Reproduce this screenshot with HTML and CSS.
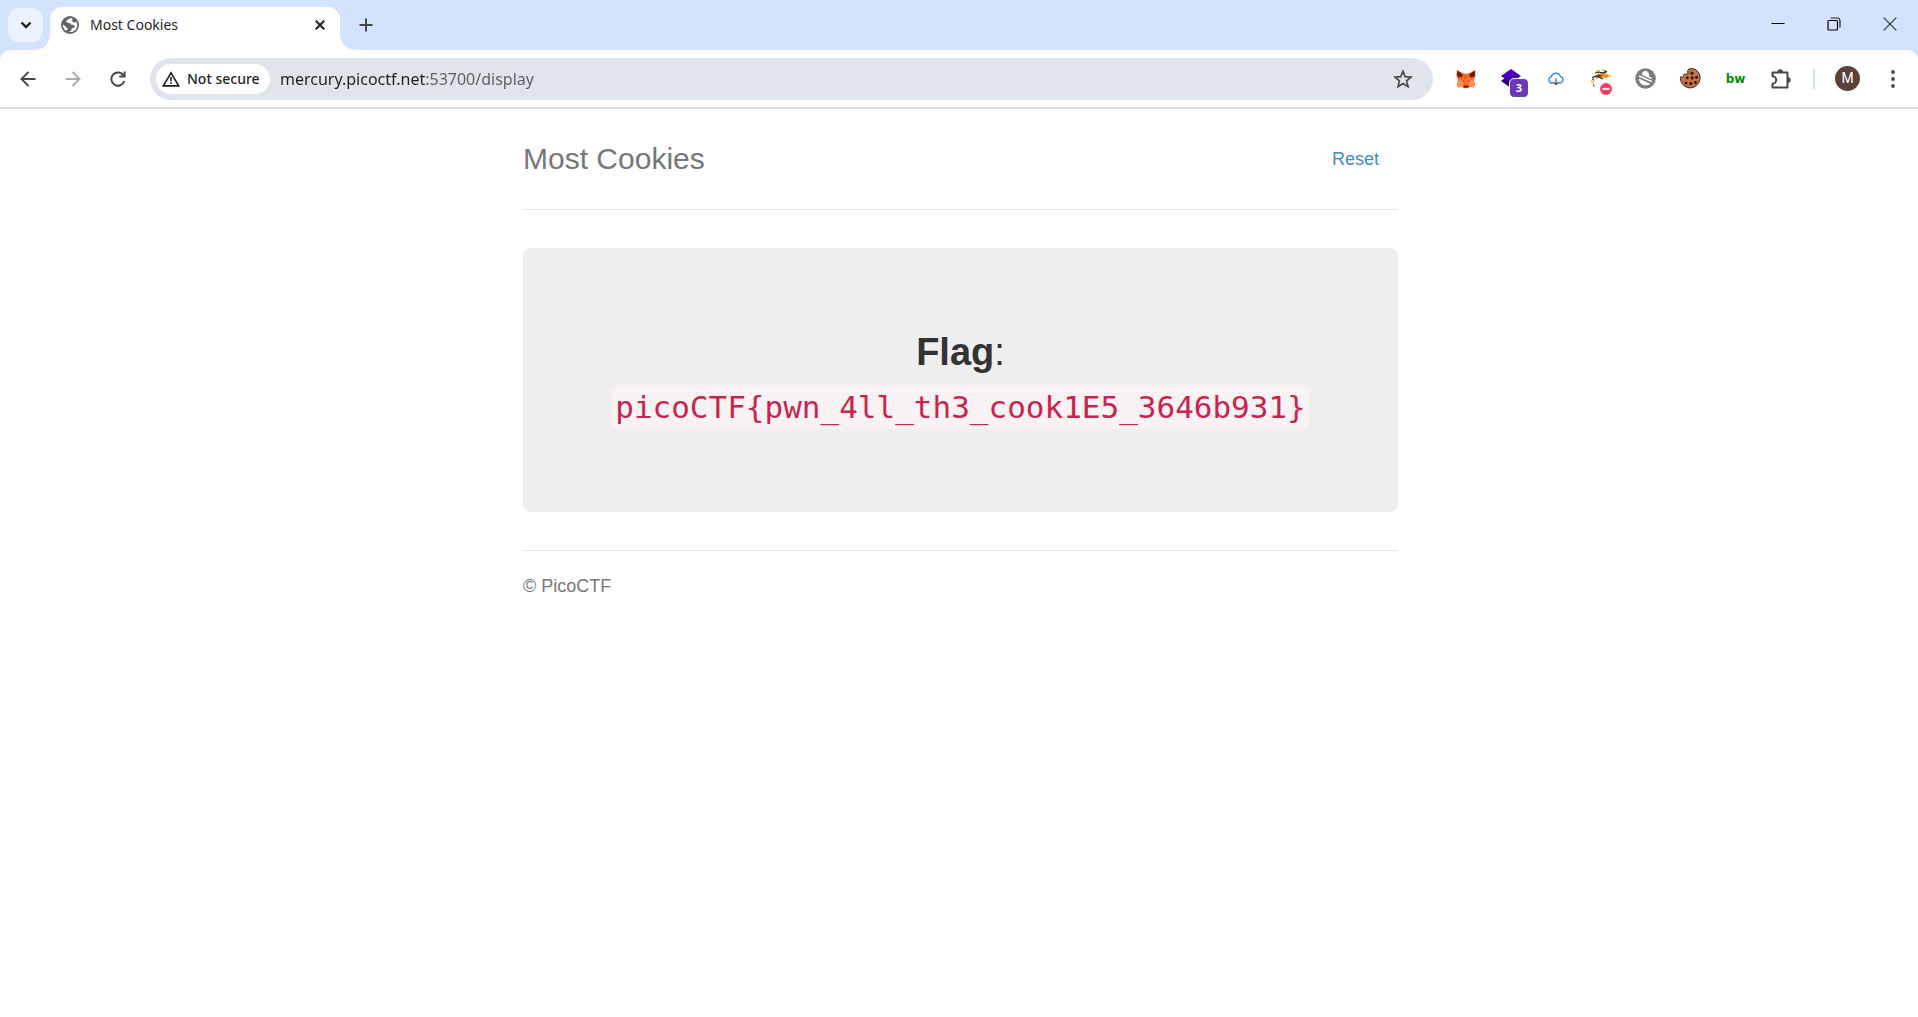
FILE: index.html
```html
<!DOCTYPE html>
<html lang="en">
<head>
<meta charset="utf-8">
<title>Most Cookies</title>
<link rel="stylesheet" href="styles.css">
</head>
<body>
<div class="browser">
  <div class="tabstrip">
    <button class="tab-search" aria-label="Search tabs"><svg width="12" height="8" viewBox="0 0 12 8"><path d="M1.500 1.500l4.500 4.500 4.500-4.500" fill="none" stroke="#1f1f1f" stroke-width="2.400"/></svg></button>
    <div class="tab">
      <svg class="favicon" width="18" height="18" viewBox="0 0 18 18"><circle cx="9" cy="9" r="9" fill="#5f6368"/><path d="M9.500 1.900C8 3 5.500 3.500 5.300 5.300c0 1.200 1.200 1.700 2.700 1.700 1.500 0 2 .7 1.800 1.800 1.800-.2 3.400.2 3.900 1.200.4 1.200-.8 1.900-2 2-.9.300-1.200 1-1.400 1.900-.5 1-1.300 1.500-2.300 2 4.600 1 8.200-2.500 8.200-6.900 0-1.200-.3-2.300-.8-3.300-1 .8-2.600 1.100-3.500.4-1-.8-1-1.800-.4-2.500.3-.5.200-1.300-2-1.700zM1.900 8.200c-.2 2.600.8 4.800 2.800 6.200 1.200 0 2-.9 2-1.900-1-.3-1.500-1-1.700-1.900-1-.4-2-1.200-3.100-2.400z" fill="#fff"/></svg>
      <span class="tab-title">Most Cookies</span>
      <button class="tab-close" aria-label="Close tab"><svg width="10" height="10" viewBox="0 0 10 10"><path d="M.8.8l8.400 8.400M9.200.8L.8 9.200" stroke="#1f1f1f" stroke-width="2"/></svg></button>
    </div>
    <button class="new-tab" aria-label="New tab"><svg width="14" height="14" viewBox="0 0 14 14"><path d="M7 .5v13M.5 7h13" stroke="#474747" stroke-width="2"/></svg></button>
    <div class="window-controls">
      <button aria-label="Minimize"><svg width="14" height="14" viewBox="0 0 14 14"><path d="M.5 6.500h13" stroke="#000"/></svg></button>
      <button aria-label="Restore"><svg width="14" height="14" viewBox="0 0 14 14" fill="none"><rect x="1" y="3.500" width="9.500" height="9.500" rx="1" stroke="#000" stroke-width="1.200"/><path d="M3.500 1h6.500a3 3 0 0 1 3 3v6.500" stroke="#222" stroke-width="1.200"/></svg></button>
      <button aria-label="Close"><svg width="14" height="14" viewBox="0 0 14 14"><path d="M.7.7l12.600 12.600M13.300.7L.7 13.300" stroke="#333" stroke-width="1.200"/></svg></button>
    </div>
  </div>
  <div class="toolbar">
    <button class="tool" aria-label="Back"><svg width="16" height="16" viewBox="0 0 16 16" fill="none" stroke="#474747" stroke-width="1.900"><path d="M15.500 8H2M8.500 1L1.500 8l7 7"/></svg></button>
    <button class="tool" aria-label="Forward"><svg width="16" height="16" viewBox="0 0 16 16" fill="none" stroke="#ababab" stroke-width="1.900"><path d="M.5 8H14M7.500 1l7 7-7 7"/></svg></button>
    <button class="tool" aria-label="Reload"><svg width="16" height="16" viewBox="0 0 16 16" fill="none" stroke="#474747" stroke-width="2"><path d="M13.800 5A6.600 6.600 0 1 0 14.300 10M14.600.5V5.600H9.300"/></svg></button>
    <form class="omnibox">
      <button type="button" class="security"><svg width="18" height="16" viewBox="0 0 18 16"><path d="M9 1.900L16.700 14.900H1.300z" fill="none" stroke="#1f1f1f" stroke-width="1.700"/><path d="M9 6v4.200M9 11.200v1.800" stroke="#1f1f1f" stroke-width="1.600"/></svg>Not secure</button>
      <input class="url" type="text" aria-label="Address" value="mercury.picoctf.net:53700/display">
      <button type="button" class="bookmark" aria-label="Bookmark this tab"><svg width="20" height="20" viewBox="0 0 20 20"><path d="M10 2.200l2.200 5.400 5.800.5-4.400 3.800 1.400 5.700-5-3.100-5 3.100 1.400-5.700L2 8.100l5.800-.5z" fill="none" stroke="#474747" stroke-width="1.700"/></svg></button>
    </form>
    <div class="extensions">
      <button class="tool" aria-label="Fox wallet"><svg width="20" height="20" viewBox="0 0 20 20"><path d="M.8 1L7.500 4.500h5L19.200 1l.3 6-1.500 4 1 4.500-1 3-4-.8-2 1.600H8l-2-1.600-4 .8-1-3L2 11 .5 7z" fill="#ff6b2b"/><path d="M1.500 1.500l5.500 4.200L5.500 8.500 2 8 .8 5.500zM18.500 1.500L13 5.700l1.500 2.800 3.500-.5 1.200-2.500z" fill="#6b1c10"/><path d="M2 12l4.500-1.500L8 15l-2 2.500-4 .8zM18 12l-4.500-1.500L12 15l2 2.500 4 .8z" fill="#ff8f50"/><path d="M8 16.500h4l.5 2h-5z" fill="#661800"/><path d="M5.500 11.300l2 .8-.2 1zM14.500 11.300l-2 .8.2 1z" fill="#222"/></svg></button>
      <button class="tool badge-host" aria-label="Layers, 3 items"><svg width="22" height="20" viewBox="0 0 22 20"><path d="M1 12l4-3 6 3 6-3 4 3-10 7z" fill="#240070"/><path d="M11 0l10 7-10 7L1 7z" fill="#4a00b4"/></svg><span class="badge">3</span></button>
      <button class="tool" aria-label="Cloud download"><svg width="16" height="14" viewBox="0 0 16 14" fill="none" stroke-width="1.300"><path d="M5.500 11H4a3.200 3.200 0 0 1-.7-6.300A4.800 4.800 0 0 1 12.500 4.700 3.200 3.200 0 0 1 12 11h-1.500" stroke="#2c86f5"/><path d="M8 6.500v6M5.500 10.200L8 12.700l2.500-2.500" stroke="#555"/></svg></button>
      <button class="tool" aria-label="Proxy switcher"><svg width="22" height="32" viewBox="0 0 22 32"><path d="M4 13.500l4-2.500 5-1.500 7 3-3 2.500-6-.5-5 1z" fill="#ed9424"/><path d="M5 10l4-1 4 1 4-1.500M2 14.500l5-1.500 6 3M15 7v3M8 12l4 1" stroke="#222" stroke-width="1.200" fill="none"/><path d="M6 8.500l4-1M12 7.500l2-1M2 17v3M3.500 20v3M19 12.500l3 1M4 16v3" stroke="#f4b044" stroke-width="1.300"/><path d="M2.500 17l1-2M3.500 22l.5 1.500" stroke="#222"/><circle cx="16" cy="26" r="6" fill="#ff3d67"/><path d="M12.500 26h7" stroke="#fff" stroke-width="1.800"/></svg></button>
      <button class="tool" aria-label="Blocker"><svg width="21" height="21" viewBox="0 0 21 21"><circle cx="10.500" cy="10.500" r="10.300" fill="#7c7c7c"/><path d="M6.800 7.300C6.800 4.800 8 3 10.500 3s3.500 1.800 3.500 3.800v1.700l2.500 1v2.700zM4 10.500l11 5.300c-1 1.100-3 1.700-5 1.500C6.300 17 3.800 14.500 4 10.500z" fill="#fff"/><path d="M3.500 7.500L17.500 13.700" stroke="#7c7c7c" stroke-width="3.600"/><path d="M4 8L17 13.600" stroke="#fff" stroke-width="1.500"/></svg></button>
      <button class="tool" aria-label="Cookie editor"><svg width="21" height="21" viewBox="0 0 21 21"><path d="M9 1c4-1.300 8 .8 10 4.200 2 4 1 9.300-2.500 12.300-4 3.500-10 3-13.500-.8C.8 14.300.1 11.500.8 8.600c1.200.8 2 .8 2.600-.1C3.200 6.500 4 6 6 6.200c1.800 0 2.300-.8 1.800-2.300C7.500 2.500 7.700 2 9 1z" fill="#c87346" stroke="#33251f"/><g fill="#221914"><circle cx="12" cy="5.200" r="1.500"/><circle cx="7.200" cy="9.700" r="1.500"/><circle cx="12.200" cy="9.800" r="1.600"/><circle cx="16.500" cy="9.300" r="1.500"/><circle cx="6" cy="15" r="1.500"/><circle cx="10.800" cy="15.500" r="1.600"/><circle cx="15.500" cy="14.500" r="1.400"/></g></svg></button>
      <button class="tool wordmark" aria-label="bw">bw</button>
      <button class="tool" aria-label="Extensions"><svg width="22" height="22" viewBox="0 0 22 22"><path d="M2.500 4.500H17.500V19.500H2.500V15.700A3.700 3.700 0 0 0 2.500 8.300z" fill="none" stroke="#474747" stroke-width="2" stroke-linejoin="round"/><path d="M7.500 4a2.700 2.700 0 0 1 5.400 0zM18 9.300a2.700 2.700 0 0 1 0 5.400z" fill="#474747"/></svg></button>
    </div>
    <span class="divider"></span>
    <button class="tool profile" aria-label="Profile"><span class="avatar">M</span></button>
    <button class="tool" aria-label="Menu"><svg width="4" height="18" viewBox="0 0 4 18" fill="#474747"><circle cx="2" cy="2" r="1.900"/><circle cx="2" cy="9" r="1.900"/><circle cx="2" cy="16" r="1.900"/></svg></button>
  </div>
</div>
<main class="page">
  <div class="container">
    <header class="header">
      <h3 class="title">Most Cookies</h3>
      <nav><a class="reset" href="#">Reset</a></nav>
    </header>
    <section class="jumbotron">
      <p class="flag"><b>Flag</b>:</p>
      <p class="flag"><code>picoCTF{pwn_4ll_th3_cook1E5_3646b931}</code></p>
    </section>
    <footer class="footer">© PicoCTF</footer>
  </div>
</main>
</body>
</html>
```
FILE: styles.css
```css
* { box-sizing: border-box; }

body {
  margin: 0;
  background: #fff;
  color: #333;
  font-family: "Liberation Sans", Arial, sans-serif;
}

button {
  display: flex;
  align-items: center;
  justify-content: center;
  padding: 0;
  border: 0;
  background: none;
  font: inherit;
  color: inherit;
}

/* Browser window */
.browser {
  background: #d3e3fd;
  color: #1f1f1f;
  font-family: "Noto Sans", "Segoe UI", sans-serif;
}

.tabstrip {
  display: flex;
  height: 50px;
  padding-left: 8px;
}

.tab-search {
  width: 35px;
  height: 34px;
  margin: 8px 7px 0 0;
  border-radius: 11px;
  background: #ebf1fe;
}

.tab {
  position: relative;
  display: flex;
  align-items: center;
  width: 290px;
  height: 43px;
  margin-top: 7px;
  padding: 0 10px 7px 11px;
  border-radius: 12px 12px 0 0;
  background: #fff;
}

.tab::before,
.tab::after {
  content: "";
  position: absolute;
  bottom: 0;
  width: 14px;
  height: 14px;
}

.tab::before {
  right: 100%;
  background: radial-gradient(circle at 0 0, transparent 13px, #fff 14px);
}

.tab::after {
  left: 100%;
  background: radial-gradient(circle at 100% 0, transparent 13px, #fff 14px);
}

.tab-title {
  flex: 1;
  margin-left: 11px;
  font-size: 14px;
  line-height: 20px;
}

.tab-close { width: 20px; height: 20px; }

.new-tab {
  width: 34px;
  height: 34px;
  margin: 8px 0 0 9px;
}

.window-controls {
  display: flex;
  margin-left: auto;
}

.window-controls button {
  width: 56px;
  height: 48px;
}

.toolbar {
  display: flex;
  align-items: center;
  height: 59px;
  padding: 0 3px 0 5px;
  border-bottom: 2px solid #e0e0e0;
  border-radius: 10px 10px 0 0;
  background: #fff;
}

.tool {
  flex: none;
  width: 45px;
  height: 42px;
}

.omnibox {
  display: flex;
  flex: 1;
  align-items: center;
  height: 42px;
  margin: 0 10px;
  padding: 0 20px 0 6px;
  border-radius: 21px;
  background: #e0e5ec;
}

.security {
  justify-content: flex-start;
  gap: 7px;
  width: 114px;
  height: 30px;
  padding-left: 6px;
  border-radius: 15px;
  background: #fff;
  font-size: 14px;
  font-weight: 500;
}

.url {
  flex: 1;
  min-width: 0;
  height: 30px;
  margin: 0 10px;
  padding: 0;
  border: 0;
  background: linear-gradient(90deg, #1f1f1f 145px, #5a5d61 145px) text;
  -webkit-text-fill-color: transparent;
  font: 16px "Noto Sans", "Segoe UI", sans-serif;
}

.extensions { display: flex; }

.badge-host { position: relative; }

.badge {
  position: absolute;
  left: 21px;
  top: 20px;
  width: 20px;
  height: 20px;
  border: 1px solid #fff;
  border-radius: 5px;
  background: #6c37bd;
  color: #fff;
  font-size: 11px;
  font-weight: 700;
  line-height: 18px;
}

.wordmark {
  color: #078a07;
  font-family: "DejaVu Sans", sans-serif;
  font-size: 12px;
  font-weight: 700;
}

.divider {
  width: 2px;
  height: 20px;
  margin: 0 10px;
  background: #d3e3fd;
}

.avatar {
  width: 25px;
  height: 25px;
  border-radius: 50%;
  background: #5d4037;
  color: #fff;
  font-family: Roboto, sans-serif;
  font-size: 14px;
  line-height: 25px;
}

/* Page content */
.page { padding-left: 3px; }

.container {
  max-width: 875px;
  margin: 0 auto;
}

.header {
  display: flex;
  align-items: center;
  justify-content: space-between;
  margin-bottom: 38px;
  padding: 30px 0;
  border-bottom: 1px solid #e5e5e5;
}

.title {
  margin: 0;
  color: #777;
  font-size: 30px;
  font-weight: 400;
  line-height: 40px;
}

.reset {
  padding: 12px 19px;
  color: #428bca;
  font-size: 18px;
  text-decoration: none;
}

.jumbotron {
  margin-bottom: 38px;
  padding: 78px 20px 80px;
  border-radius: 8px;
  background: #eee;
  text-align: center;
}

.flag {
  margin: 0;
  font-size: 38px;
  line-height: 53px;
}

code {
  padding: 4px 3px;
  border-radius: 5px;
  background: #f9f2f4;
  color: #c7254e;
  font-family: "DejaVu Sans Mono", Consolas, monospace;
  font-size: 31px;
  line-height: 1;
}

.footer {
  padding-top: 22px;
  border-top: 1px solid #e5e5e5;
  color: #777;
  font-size: 18px;
  line-height: 26px;
}
```
